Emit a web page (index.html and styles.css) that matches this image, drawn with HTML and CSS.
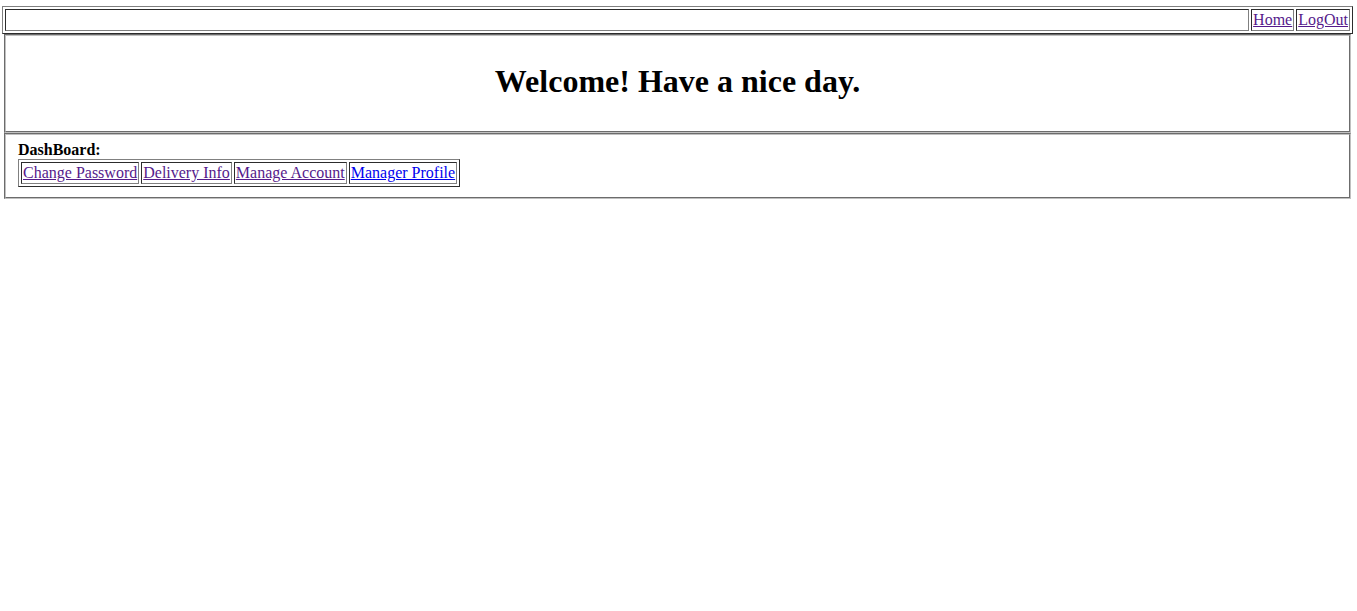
FILE: index.html
```html
<!DOCTYPE html>
<html>
<head>
<meta charset="utf-8">
<title>Dashboard</title>
<link rel="stylesheet" href="styles.css">
</head>
<body>
<div class="page">
  <table class="topbar">
    <tr>
      <td class="spacer"></td>
      <td class="cell"><a class="visited" href="#">Home</a></td>
      <td class="cell"><a class="visited" href="#">LogOut</a></td>
    </tr>
  </table>
  <div class="box header">
    <h1 class="welcome">Welcome! Have a nice day.</h1>
  </div>
  <div class="box dashboard">
    <div class="dash-title">DashBoard:</div>
    <table class="menu">
      <tr>
        <td class="cell"><a class="visited" href="#">Change Password</a></td>
        <td class="cell"><a class="visited" href="#">Delivery Info</a></td>
        <td class="cell"><a class="visited" href="#">Manage Account</a></td>
        <td class="cell"><a class="link" href="#">Manager Profile</a></td>
      </tr>
    </table>
  </div>
</div>
</body>
</html>
```
FILE: styles.css
```css
html, body {
  margin: 0;
  padding: 0;
  background: #ffffff;
}
body {
  font-family: "Liberation Serif", "Times New Roman", serif;
  font-size: 16px;
  color: #000000;
}
.page {
  margin: 6px 0 0 2px;
  width: 1351px;
}
.topbar, .menu {
  border: 1px outset gray;
  border-collapse: separate;
  border-spacing: 2px;
}
.topbar {
  width: 100%;
}
.topbar td, .menu td {
  border: 1px inset gray;
  padding: 1px;
  line-height: 18px;
  height: 18px;
}
.topbar .spacer {
  width: 100%;
}
.cell {
  white-space: nowrap;
}
a.visited {
  color: #551a8b;
  text-decoration: underline;
}
a.link {
  color: #0000ee;
  text-decoration: underline;
}
.box {
  margin: 0 2px;
  border: 2px groove rgb(192, 192, 192);
  padding: 5.6px 12px 10px;
}
.welcome {
  margin: 21.44px 0;
  font-size: 32px;
  font-weight: bold;
  text-align: center;
  line-height: 37px;
}
.dash-title {
  font-weight: bold;
  line-height: 18px;
}
```
